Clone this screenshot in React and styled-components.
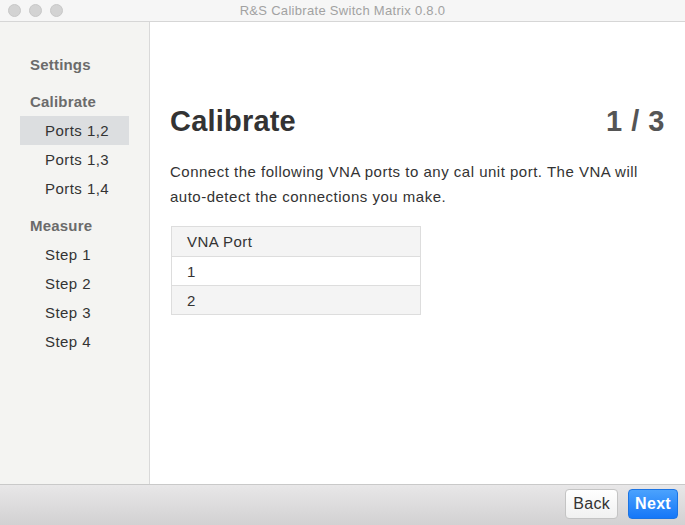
import React from 'react'
import styled, { createGlobalStyle } from 'styled-components'

const GlobalStyle = createGlobalStyle`
  html, body {
    margin: 0;
    padding: 0;
    background: #ffffff;
  }
  body {
    font-family: "Liberation Sans", Arial, sans-serif;
    -webkit-font-smoothing: antialiased;
  }
`

const nav = [
  { title: 'Settings', items: [] },
  { title: 'Calibrate', items: ['Ports 1,2', 'Ports 1,3', 'Ports 1,4'] },
  { title: 'Measure', items: ['Step 1', 'Step 2', 'Step 3', 'Step 4'] },
]

const ports = ['1', '2']

const App = () => {
  return (
    <Window>
      <GlobalStyle />
      <TitleBar>
        <Lights>
          <Light />
          <Light />
          <Light />
        </Lights>
        <WindowTitle>R&amp;S Calibrate Switch Matrix 0.8.0</WindowTitle>
      </TitleBar>
      <Body>
        <Sidebar>
          {nav.map(group => (
            <Group key={group.title}>
              <GroupTitle>{group.title}</GroupTitle>
              {group.items.map(item => (
                <NavItem key={item} $active={item === 'Ports 1,2'}>
                  {item}
                </NavItem>
              ))}
            </Group>
          ))}
        </Sidebar>
        <Main>
          <Header>
            <Heading>Calibrate</Heading>
            <StepCount>1 / 3</StepCount>
          </Header>
          <Intro>
            Connect the following VNA ports to any cal unit port. The VNA will
            auto&#8209;detect the connections you make.
          </Intro>
          <Table>
            <thead>
              <tr>
                <HeadCell>VNA Port</HeadCell>
              </tr>
            </thead>
            <tbody>
              {ports.map((p, i) => (
                <Row key={p} $striped={i % 2 === 1}>
                  <Cell>{p}</Cell>
                </Row>
              ))}
            </tbody>
          </Table>
        </Main>
      </Body>
      <Footer>
        <Button>Back</Button>
        <Button $primary>Next</Button>
      </Footer>
    </Window>
  )
}

const Window = styled.div`
  width: 685px;
  height: 525px;
  display: flex;
  flex-direction: column;
  overflow: hidden;
  background: #ffffff;
`

const TitleBar = styled.div`
  position: relative;
  height: 21px;
  flex: none;
  display: flex;
  align-items: center;
  justify-content: center;
  background: #f6f6f6;
  border-bottom: 1px solid #d6d6d6;
`

const Lights = styled.div`
  position: absolute;
  left: 8px;
  top: 4px;
  display: flex;
  gap: 8px;
`

const Light = styled.span`
  width: 11px;
  height: 11px;
  border-radius: 50%;
  background: #d3d3d3;
  border: 1px solid #c8c8c8;
`

const WindowTitle = styled.div`
  font-size: 13px;
  color: #a2a2a2;
  letter-spacing: 0.3px;
`

const Body = styled.div`
  flex: 1;
  display: flex;
  min-height: 0;
`

const Sidebar = styled.nav`
  width: 150px;
  flex: none;
  box-sizing: border-box;
  padding: 28px 20px 0;
  background: #f4f4f2;
  border-right: 1px solid #d9d9d9;
  display: flex;
  flex-direction: column;
  gap: 8px;
`

const Group = styled.div`
  display: flex;
  flex-direction: column;
`

const GroupTitle = styled.div`
  height: 29px;
  line-height: 29px;
  padding-left: 10px;
  font-size: 15px;
  font-weight: bold;
  letter-spacing: 0.2px;
  color: #6b6b6b;
`

const NavItem = styled.div`
  height: 29px;
  line-height: 29px;
  padding-left: 25px;
  font-size: 15px;
  letter-spacing: 0.45px;
  color: #333333;
  background: ${({ $active }) => ($active ? '#dcdee0' : 'transparent')};
`

const Main = styled.main`
  flex: 1;
  padding: 81px 20px 0 20px;
`

const Header = styled.div`
  display: flex;
  justify-content: space-between;
  align-items: baseline;
`

const Heading = styled.h1`
  margin: 0;
  font-size: 29px;
  line-height: 36px;
  font-weight: bold;
  letter-spacing: 0.2px;
  color: #333333;
`

const StepCount = styled.div`
  font-size: 29px;
  line-height: 36px;
  font-weight: bold;
  letter-spacing: 0.5px;
  color: #555555;
`

const Intro = styled.p`
  margin: 20px 0 17px;
  font-size: 15px;
  line-height: 25px;
  letter-spacing: 0.5px;
  color: #333333;
`

const Table = styled.table`
  width: 250px;
  margin-left: 1px;
  border-collapse: collapse;
  font-size: 15px;
  letter-spacing: 0.45px;
  color: #333333;
`

const HeadCell = styled.th`
  height: 29px;
  padding: 0 15px;
  text-align: left;
  font-weight: normal;
  background: #f4f4f4;
  border: 1px solid #dddddd;
`

const Row = styled.tr`
  background: ${({ $striped }) => ($striped ? '#f4f4f4' : '#ffffff')};
`

const Cell = styled.td`
  height: 28px;
  padding: 0 15px;
  border: 1px solid #dddddd;
`

const Footer = styled.div`
  height: 41px;
  flex: none;
  box-sizing: border-box;
  border-top: 1px solid #c9c9c9;
  background: linear-gradient(#e8e7e8, #d2d1d2);
  display: flex;
  align-items: center;
  justify-content: flex-end;
  gap: 10px;
  padding: 0 7px 3px 0;
`

const Button = styled.button`
  height: 30px;
  padding: 0 ${({ $primary }) => ($primary ? '6px' : '7px')};
  font-family: "Liberation Sans", Arial, sans-serif;
  font-size: 16px;
  letter-spacing: 0.3px;
  border-radius: 4px;
  cursor: pointer;
  color: ${({ $primary }) => ($primary ? '#ffffff' : '#333333')};
  font-weight: ${({ $primary }) => ($primary ? 'bold' : 'normal')};
  background: ${({ $primary }) =>
    $primary ? 'linear-gradient(#4ba2fd, #1577f8)' : 'linear-gradient(#ffffff, #f1f1f1)'};
  border: 1px solid ${({ $primary }) => ($primary ? '#1b74e4' : '#c4c4c4')};
`

export default App
